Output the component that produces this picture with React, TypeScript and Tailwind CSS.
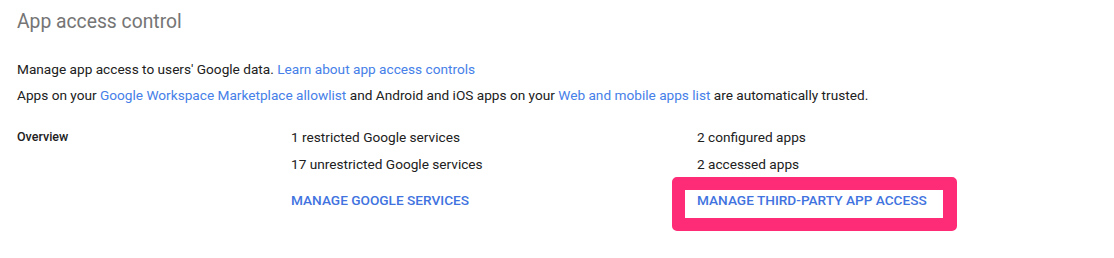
const linkCls = 'text-[#4680e8]';

export default function App() {
  return (
    <div className="min-h-[258px] bg-white pl-[17px] pt-2 font-['Roboto',sans-serif] text-[#212121]">
      <h1 className="text-[19.3px] leading-7 font-normal text-[#757575]">App access control</h1>

      <div className="mt-[23px] text-[13.65px] leading-5">
        <p>
          Manage app access to users' Google data. <a className={linkCls}>Learn about app access controls</a>
        </p>
        <p className="mt-[6px]">
          Apps on your <a className={linkCls}>Google Workspace Marketplace allowlist</a> and Android and iOS apps on your{' '}
          <a className={linkCls}>Web and mobile apps list</a> are automatically trusted.
        </p>
      </div>

      <div className="mt-[22px] flex items-start text-[13.65px] leading-5">
        <div className="w-[274px] text-[12.5px] font-medium">Overview</div>

        <div className="flex w-[406px] flex-col">
          <span>1 restricted Google services</span>
          <span className="mt-[7px]">17 unrestricted Google services</span>
          <button className="mt-4 w-fit text-left font-medium uppercase text-[#4173e0]">Manage Google services</button>
        </div>

        <div className="flex flex-col">
          <span>2 configured apps</span>
          <span className="mt-[7px]">2 accessed apps</span>
          {/* highlight frame around the action */}
          <div className="-ml-[25px] mt-[3px] w-[285px] rounded-[5px] border-[13px] border-r-[14px] border-t-[13px] border-[#fe2c76] bg-white pl-3 pb-2">
            <button className="text-left text-[13.65px] leading-4 font-medium uppercase text-[#4173e0]">
              Manage third-party app access
            </button>
          </div>
        </div>
      </div>
    </div>
  );
}
